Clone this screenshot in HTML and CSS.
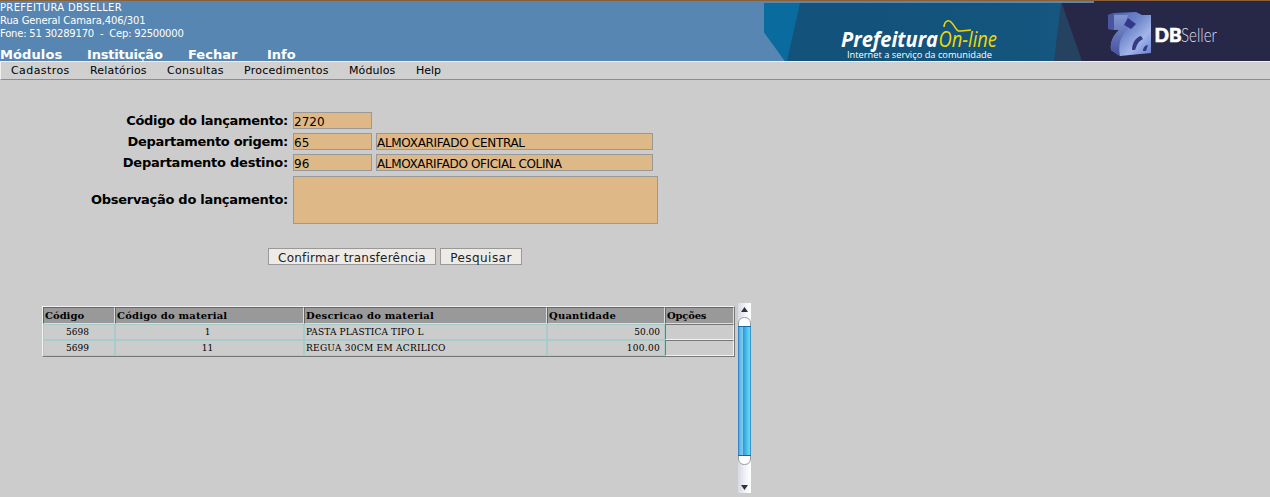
FILE: index.html
```html
<!DOCTYPE html>
<html lang="pt-BR">
<head>
<meta charset="utf-8">
<title>DBSeller</title>
<link rel="stylesheet" href="styles.css">
</head>
<body>
<header class="header">
  <div class="header-left">
    <div class="org"><span class="org-name">PREFEITURA DBSELLER</span><br><span class="org-street">Rua General Camara,406/301</span><br><span class="org-phone">Fone: 51 30289170 &nbsp;-&nbsp; Cep: 92500000</span></div>
    <nav class="main-nav"><a class="n1">Módulos</a><a class="n2">Instituição</a><a class="n3">Fechar</a><a class="n4">Info</a></nav>
  </div>
  <svg class="banner" width="506" height="61" viewBox="0 0 506 61">
    <defs>
      <linearGradient id="teal" x1="0" x2="1"><stop offset="0" stop-color="#13527a"/><stop offset=".8" stop-color="#13557d"/><stop offset="1" stop-color="#175982"/></linearGradient>
      <linearGradient id="face" x1="0" y1="0" x2="1" y2="1"><stop offset="0" stop-color="#485caf"/><stop offset=".45" stop-color="#7088cc"/><stop offset=".7" stop-color="#a3b5e8"/><stop offset="1" stop-color="#6680d2"/></linearGradient>
      <linearGradient id="side" x1="0" y1="0" x2="0" y2="1"><stop offset="0" stop-color="#8295d0"/><stop offset="1" stop-color="#4450a0"/></linearGradient>
    </defs>
    <path d="M0 3H330V61H21L0 32Z" fill="url(#teal)"/>
    <path d="M0 3H36L23 61H21L0 32Z" fill="#0a6c9e"/>
    <path d="M297 3H330V61H290Z" fill="#254260"/>
    <path d="M297 1H506V61H318Z" fill="#272747"/>
    <path d="M0 1H330V3H0Z" fill="#5786b2"/>
    <text x="77" y="46.500" class="logo-pref" textLength="97" lengthAdjust="spacingAndGlyphs">Prefeitura</text>
    <text x="174.500" y="46.500" class="logo-online" textLength="58.500" lengthAdjust="spacingAndGlyphs">On-line</text>
    <path d="M180 27C180 22 184 19 187 22C192 27 192 32 197 31L207 30" fill="none" stroke="#f0d900" stroke-width="1.500"/>
    <text x="83" y="57.500" class="logo-tag" textLength="145" lengthAdjust="spacingAndGlyphs">Internet a serviço da comunidade</text>
    <path d="M344 15L350 13L372 12L378 15L387 15V53L376 54L356 56L347 50C346 42 349 36 355 30L344 29Z" fill="url(#face)"/>
    <path d="M344 15L350 13V30L344 29Z" fill="#4a559f"/>
    <path d="M350 15L364 15L361 24L364 29C356 36 354 45 356 56L347 50C346 42 349 36 355 30L350 30Z" fill="url(#side)"/>
    <path d="M364 18L372 24L367 29L360 25Z" fill="#333887"/>
    <path d="M368 50C368 43 372 37 377 36L379 39C373 42 373 46 371 50ZM379 51C379 48 381 45 384 45L382 51Z" fill="#353c83"/>
    <text x="390.500" y="42" class="logo-db" textLength="27" lengthAdjust="spacingAndGlyphs">DB</text>
    <text x="417" y="42" class="logo-seller" textLength="36" lengthAdjust="spacingAndGlyphs">Seller</text>
    <path d="M0 0H506V1H0Z" fill="#8a6038"/>
  </svg>
</header>
<nav class="sub-nav"><a class="s1">Cadastros</a><a class="s2">Relatórios</a><a class="s3">Consultas</a><a class="s4">Procedimentos</a><a class="s5">Módulos</a><a class="s6">Help</a></nav>
<main class="main">
  <form class="form">
    <div class="row"><label class="l1">Código do lançamento:</label><span class="field code">2720</span></div>
    <div class="row"><label class="l2">Departamento origem:</label><span class="field code">65</span><span class="field name f1">ALMOXARIFADO CENTRAL</span></div>
    <div class="row"><label class="l3">Departamento destino:</label><span class="field code">96</span><span class="field name f2">ALMOXARIFADO OFICIAL COLINA</span></div>
    <div class="row row-note"><label class="l4">Observação do lançamento:</label><span class="note"></span></div>
    <div class="actions"><button type="button" class="btn b1">Confirmar transferência</button><button type="button" class="btn b2">Pesquisar</button></div>
  </form>
  <section class="list">
    <div class="grid">
      <div class="th"><span class="h1">Código</span></div><div class="th"><span class="h2">Código do material</span></div><div class="th"><span class="h3">Descricao do material</span></div><div class="th"><span class="h4">Quantidade</span></div><div class="th"><span class="h5">Opções</span></div>
      <div class="td c">5698</div><div class="td c wide">1</div><div class="td"><span class="d1">PASTA PLASTICA TIPO L</span></div><div class="td r">50.00</div><div class="td opt"></div>
      <div class="td c">5699</div><div class="td c wide">11</div><div class="td"><span class="d2">REGUA 30CM EM ACRILICO</span></div><div class="td r"><span class="d3">100.00</span></div><div class="td opt"></div>
    </div>
    <svg class="scroll" width="13" height="190" viewBox="0 0 13 190">
      <defs>
        <linearGradient id="track"><stop offset="0" stop-color="#d7d9e3"/><stop offset=".6" stop-color="#f3f4fb"/><stop offset="1" stop-color="#fff"/></linearGradient>
        <linearGradient id="thumb"><stop offset="0" stop-color="#2476bd"/><stop offset=".14" stop-color="#68b7e5"/><stop offset=".36" stop-color="#78cdef"/><stop offset=".42" stop-color="#2e9bd7"/><stop offset=".65" stop-color="#4cbce7"/><stop offset=".88" stop-color="#65d8f2"/><stop offset="1" stop-color="#2476bd"/></linearGradient>
      </defs>
      <path d="M0 0H13V190H0Z" fill="url(#track)"/>
      <path d="M.5 23V20Q1 14.500 6.500 14.500T12.500 20V23M.5 153V156Q1 161.500 6.500 161.500T12.500 156V153" fill="#fff" stroke="#999aa2"/>
      <path d="M0 23H13V153H0Z" fill="url(#thumb)"/>
      <path d="M0 23.500H13M0 152.500H13" stroke="#1766aa"/>
      <path d="M3 9L6.500 4L10 9ZM3 182H10L6.500 187Z" fill="#333"/>
    </svg>
  </section>
</main>
</body>
</html>
```
FILE: styles.css
```css
* { box-sizing: border-box; }
body { margin: 0; background: #ccc; color: #000; font-family: "DejaVu Sans", sans-serif; height: 497px; overflow: hidden; }
.header { display: flex; height: 61px; background: #5786b2; color: #fff; border-top: 1px solid #8a6038; }
.header-left { flex: 1; }
.banner { margin-top: -1px; }
.org { font-size: 10px; line-height: 13px; height: 46px; white-space: nowrap; }
.org-name { letter-spacing: 0.33px; }
.org-street { letter-spacing: -0.12px; }
.org-phone { letter-spacing: -0.2px; }
.main-nav { display: flex; font-size: 13px; font-weight: bold; line-height: 15px; white-space: nowrap; }
.n1 { width: 87px; letter-spacing: 0.1px; }
.n2 { width: 101px; letter-spacing: -0.2px; }
.n3 { width: 79px; }
.logo-pref { font: italic bold 22px "Open Sans", sans-serif; fill: #fff; }
.logo-online { font: italic 22px "Open Sans", sans-serif; fill: #f0d900; }
.logo-tag { font: 9.5px "Open Sans", sans-serif; fill: #fff; }
.logo-db { font: 900 18px Lato, sans-serif; fill: #fff; stroke: #fff; stroke-width: 0.6px; }
.logo-seller { font: 300 19px Lato, sans-serif; fill: #ddddea; }
.sub-nav { display: flex; height: 19px; padding-left: 10px; background: #d0d0d0; border: solid; border-width: 1px 0 1px 1px; border-color: #f0f0f0 #8d8d8d #8d8d8d #f0f0f0; font-size: 11px; line-height: 17px; white-space: nowrap; }
.s1 { width: 79px; letter-spacing: 0.42px; }
.s2 { width: 77px; letter-spacing: 0.2px; }
.s3 { width: 77px; letter-spacing: 0.33px; }
.s4 { width: 105px; letter-spacing: 0.25px; }
.s5 { width: 67px; letter-spacing: 0.1px; }
.main { padding-top: 32px; }
.row { display: flex; height: 17px; margin-bottom: 4px; gap: 4px; }
.row label { width: 289px; padding-right: 1px; text-align: right; font-size: 13px; font-weight: bold; line-height: 17px; white-space: nowrap; }
.row .l1, .row .l2 { letter-spacing: -0.33px; }
.row .l3 { letter-spacing: -0.24px; }
.field { border: 1px solid #999; background: #deb887; font-size: 12px; line-height: 15px; padding-top: 2px; white-space: nowrap; }
.f1 { letter-spacing: -0.3px; }
.f2 { letter-spacing: -0.37px; }
.code { width: 79px; }
.name { width: 277px; }
.row-note { height: 48px; margin: 5px 0 24px; }
.row .l4 { line-height: 47px; letter-spacing: -0.29px; }
.note { width: 365px; border: 1px solid #999; background: #deb887; }
.actions { display: flex; gap: 4px; padding-left: 268px; }
.btn { height: 17px; padding: 2px 0 0; border: 1px solid #999; background: #eeebe6; color: #222; font: 12px/15px "DejaVu Sans", sans-serif; white-space: nowrap; }
.b1 { width: 168px; letter-spacing: 0.22px; }
.b2 { width: 82px; letter-spacing: 0.45px; }
.list { display: flex; gap: 3px; padding: 38px 0 0 42px; align-items: flex-start; }
.grid { display: grid; grid-template-columns: 72px 189px 243px 118px 69px; grid-template-rows: 17px 16px 16px; width: 693px; height: 51px; margin-top: 3px; border: 1px solid; border-color: #f2f2f2 #777 #777 #f2f2f2; font-family: "DejaVu Serif", serif; font-size: 9px; white-space: nowrap; }
.th { background: #999; border: 1px solid; border-color: #666 #ddd #ddd #666; font-size: 10px; line-height: 16px; font-weight: bold; padding-left: 1px; }
.h2 { letter-spacing: 0.18px; }
.h3 { letter-spacing: 0.24px; }
.h4 { letter-spacing: 0.2px; }
.h5 { letter-spacing: -0.2px; }
.td { border: 1px solid #a6cccb; line-height: 14px; padding-left: 1px; }
.d1 { letter-spacing: 0.12px; }
.d2 { letter-spacing: 0.27px; }
.d3 { letter-spacing: 0.3px; }
.td.c { text-align: center; padding: 0 3px 0 0; }
.td.r { text-align: right; padding-right: 4px; }
.td.wide { padding-right: 4px; }
.td.opt { border-color: #777 #f2f2f2 #f2f2f2 #777; }
.scroll { display: block; }
```
